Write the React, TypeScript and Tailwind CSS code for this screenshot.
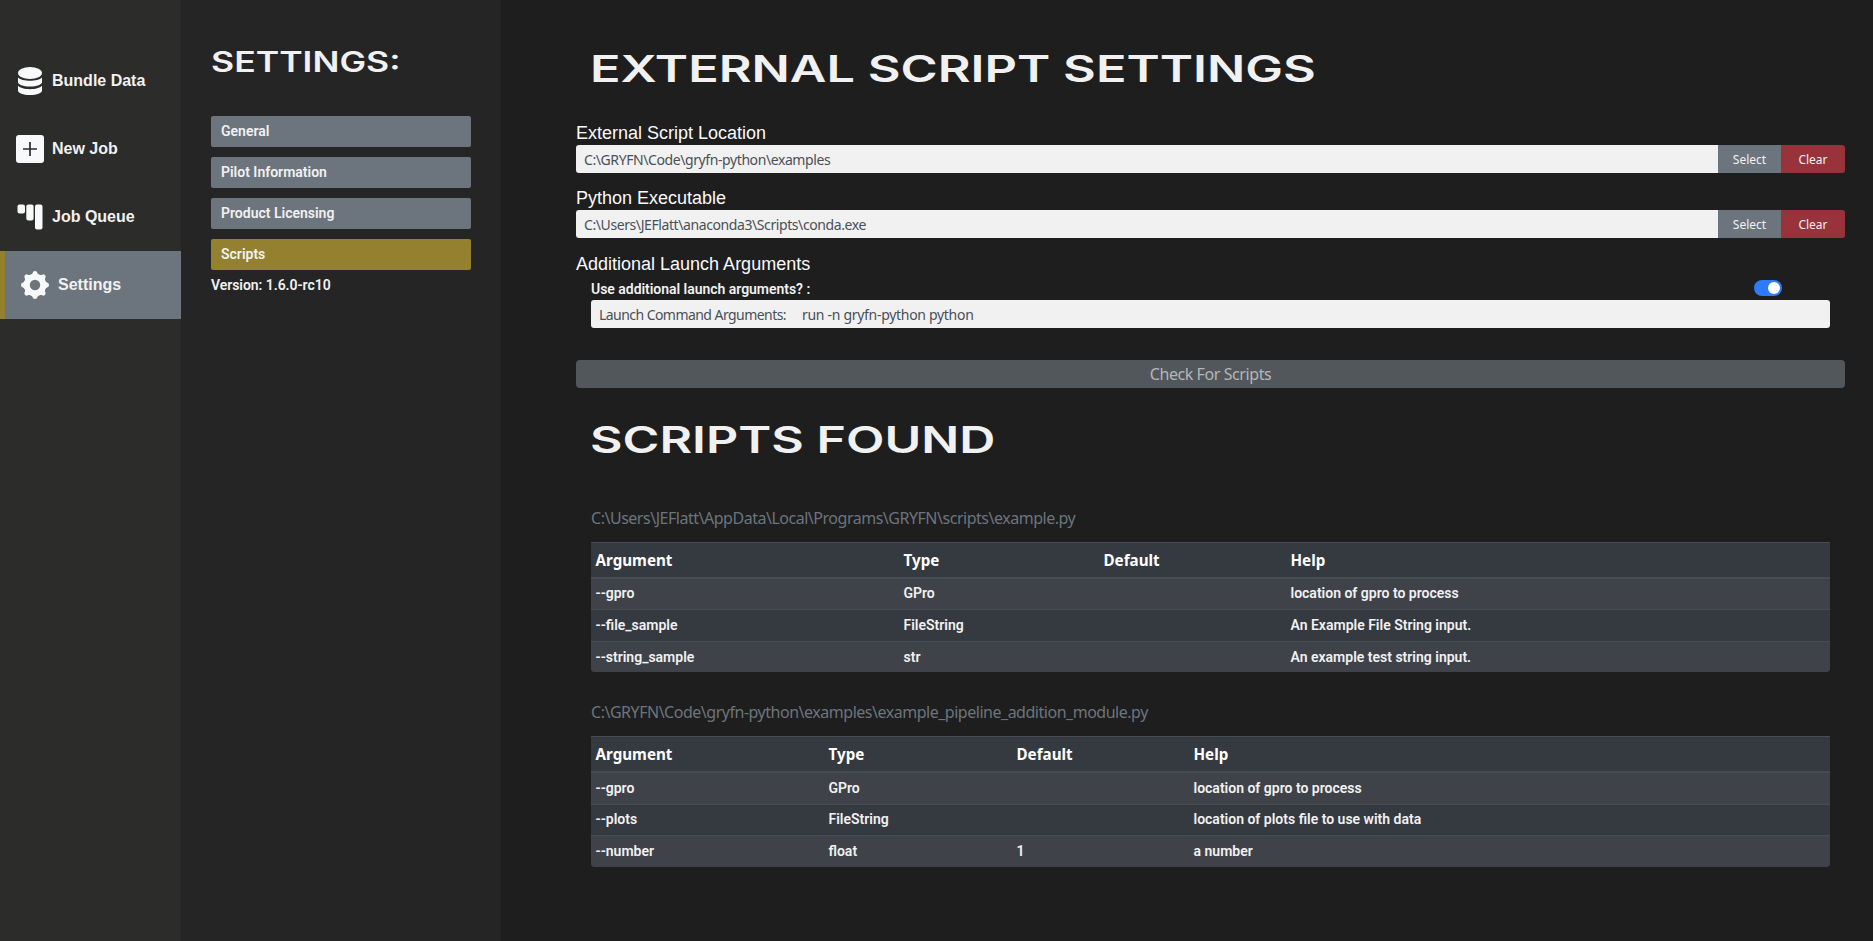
import type { ReactNode } from "react";

function DatabaseIcon() {
  return (
    <svg width="24" height="28" viewBox="0 0 24 28" fill="#f8f9fa">
      <ellipse cx="12" cy="6" rx="12" ry="6" />
      <path d="M0 10.500c2 2.200 7 3.300 12 3.300s10-1.100 12-3.300V15c0 2.400-5 4.500-12 4.500S0 17.400 0 15z" />
      <path d="M0 18.800c2 2.200 7 3.400 12 3.400s10-1.200 12-3.400V23.500c0 2.400-5 4.500-12 4.500S0 25.900 0 23.500z" />
    </svg>
  );
}

function NewJobIcon() {
  return (
    <svg width="28" height="28" viewBox="0 0 28 28">
      <rect width="28" height="28" rx="3" fill="#f8f9fa" />
      <path d="M14 7v14M7 14h14" stroke="#2c2c2a" strokeWidth="1.700" fill="none" />
    </svg>
  );
}

function QueueIcon() {
  return (
    <svg width="26" height="26" viewBox="0 0 26 26" fill="#f8f9fa">
      <rect x="0.500" y="0.500" width="7.500" height="9" rx="2" />
      <rect x="9.300" y="0.500" width="7.300" height="16" rx="2" />
      <rect x="18" y="0.500" width="7.500" height="25" rx="2" />
    </svg>
  );
}

function GearIcon() {
  return (
    <svg width="28" height="28" viewBox="-14 -14 28 28" fill="#f8f9fa">
      <circle r="8.200" fill="none" stroke="#f8f9fa" strokeWidth="6" />
      {[0, 45, 90, 135, 180, 225, 270, 315].map((a) => (
        <path key={a} d="M-4.500-9.500Q-2.600-11-1.900-13Q-1.500-14 0-14T1.900-13Q2.600-11 4.500-9.500L2-6h-4z" transform={`rotate(${a})`} />
      ))}
    </svg>
  );
}

function NavItem({ icon, label, active }: { icon: ReactNode; label: string; active?: boolean }) {
  return (
    <div
      className={
        "flex h-[68px] items-center font-['Liberation_Sans',sans-serif] text-[16px] font-bold text-[#f1f1f1] " +
        (active ? "gap-[9px] border-l-[5px] border-[#938130] bg-[#6c757d] pl-4" : "gap-2 pl-4")
      }
    >
      <span className="flex w-7 justify-center">{icon}</span>
      <span>{label}</span>
    </div>
  );
}

function PathField({ label, value }: { label: string; value: string }) {
  return (
    <div className="h-[65px]">
      <div className="h-[25px] font-['Liberation_Sans',sans-serif] text-[18px] leading-[27px] text-[#f8f9fa]">{label}</div>
      <div className="flex h-7 overflow-hidden rounded-[3px] font-['Noto_Sans',sans-serif]">
        <div className="flex-1 bg-[#f1f1f1] pl-2 text-[14px] leading-[29px] tracking-[-0.410px] text-[#495057]">{value}</div>
        <button className="w-[63px] bg-[#6c757d] pt-0.5 text-[12px] text-[#f1f1f1]">Select</button>
        <button className="w-16 bg-[#98323b] pt-0.5 text-[12px] text-[#f1f1f1]">Clear</button>
      </div>
    </div>
  );
}

type Script = { path: string; cols: string; rows: string[][]; heights: string[] };

const scripts: Script[] = [
  {
    path: "C:\\Users\\JEFlatt\\AppData\\Local\\Programs\\GRYFN\\scripts\\example.py",
    cols: "grid-cols-[308px_200px_187px_1fr]",
    heights: ["h-[30px] pb-px", "h-[32px]", "h-[31px]"],
    rows: [
      ["--gpro", "GPro", "", "location of gpro to process"],
      ["--file_sample", "FileString", "", "An Example File String input."],
      ["--string_sample", "str", "", "An example test string input."],
    ],
  },
  {
    path: "C:\\GRYFN\\Code\\gryfn-python\\examples\\example_pipeline_addition_module.py",
    cols: "grid-cols-[233px_188px_177px_1fr]",
    heights: ["h-[31px]", "h-[31px] pb-0.5", "h-[32px]"],
    rows: [
      ["--gpro", "GPro", "", "location of gpro to process"],
      ["--plots", "FileString", "", "location of plots file to use with data"],
      ["--number", "float", "1", "a number"],
    ],
  },
];

function ScriptTable({ script }: { script: Script }) {
  return (
    <section>
      <div className="h-[35px] font-['Noto_Sans',sans-serif] text-[16px] leading-[23px] tracking-[-0.480px] whitespace-nowrap text-[#6c757d]">
        {script.path}
      </div>
      <div className="overflow-hidden rounded-b-[4px] bg-[#343a40]">
        <div
          className={
            "grid h-[37px] items-center border-t border-b-2 border-t-[#454d55] border-b-[#474b54] bg-[#353940] pl-[4.500px] font-['Noto_Sans',sans-serif] text-[15.200px] font-bold text-white " +
            script.cols
          }
        >
          {["Argument", "Type", "Default", "Help"].map((h) => (
            <span key={h}>{h}</span>
          ))}
        </div>
        {script.rows.map((row, i) => (
          <div
            key={row[0]}
            className={
              "grid items-center pl-[4.500px] font-['Roboto',sans-serif] text-[14px] font-semibold text-[#f1f1f1] " +
              script.cols + " " + script.heights[i] + " " +
              (i % 2 === 0 ? "bg-[#3f4349] " : "bg-[#353940] ") +
              (i > 0 ? "border-t border-[#474b54]" : "")
            }
          >
            {row.map((cell, c) => (
              <span key={c}>{cell}</span>
            ))}
          </div>
        ))}
      </div>
    </section>
  );
}

export default function App() {
  return (
    <div className="flex h-[941px] w-[1873px] overflow-hidden bg-[#1e1e1e]">
      <nav className="w-[181px] shrink-0 bg-[#2c2c2a] pt-[47px]">
        <NavItem icon={<DatabaseIcon />} label="Bundle Data" />
        <NavItem icon={<NewJobIcon />} label="New Job" />
        <NavItem icon={<QueueIcon />} label="Job Queue" />
        <NavItem icon={<GearIcon />} label="Settings" active />
      </nav>

      <aside className="w-80 shrink-0 bg-[#252525] px-[30px] pt-[42px] font-['Roboto',sans-serif] text-[14px] font-semibold text-[#f1f1f1]">
        <h2 className="h-[74px] origin-left scale-x-[1.270] font-['Inter',sans-serif] text-[28px] leading-10 font-semibold whitespace-nowrap">
          SETTINGS:
        </h2>
        <div className="flex flex-col gap-2.5">
          {["General", "Pilot Information", "Product Licensing", "Scripts"].map((name) => (
            <div
              key={name}
              className={"h-[31px] rounded-[2px] pl-2.5 leading-[30px] " + (name === "Scripts" ? "bg-[#938130]" : "bg-[#6c757d]")}
            >
              {name}
            </div>
          ))}
        </div>
        <div className="leading-[30px] tracking-[-0.050px]">Version: 1.6.0-rc10</div>
      </aside>

      <main className="w-[1344px] pt-10 pl-[75px]">
        <h1 className="ml-[14px] h-20 w-fit origin-left scale-x-[1.363] font-['Inter',sans-serif] text-[37px] leading-[58px] font-semibold whitespace-nowrap text-[#f1f1f1]">
          EXTERNAL SCRIPT SETTINGS
        </h1>
        <PathField label="External Script Location" value="C:\GRYFN\Code\gryfn-python\examples" />
        <PathField label="Python Executable" value="C:\Users\JEFlatt\anaconda3\Scripts\conda.exe" />
        <div className="h-[30px] font-['Liberation_Sans',sans-serif] text-[18px] leading-[29px] text-[#f8f9fa]">
          Additional Launch Arguments
        </div>
        <div className="mx-[15px]">
          <div className="flex h-5 items-center justify-between pr-12 font-['Roboto',sans-serif] text-[14px] font-semibold text-[#f1f1f1]">
            <span className="-mt-0.5 tracking-[-0.030px]">Use additional launch arguments? :</span>
            <span className="-mt-1 flex h-4 w-7 justify-end rounded-full bg-[#2f7bff] p-0.5">
              <span className="h-3 w-3 rounded-full bg-white" />
            </span>
          </div>
          <div className="flex h-7 gap-4 rounded-[3px] bg-[#f1f1f1] pl-2 font-['Noto_Sans',sans-serif] text-[14px] leading-[29px] text-[#495057]">
            <span className="tracking-[-0.550px]">Launch Command Arguments:</span>
            <span className="tracking-[-0.300px]">run -n gryfn-python python</span>
          </div>
        </div>
        <button className="mt-8 block h-7 w-full rounded-[4px] bg-[#52575b] font-['Noto_Sans',sans-serif] text-[16px] leading-[27px] tracking-[-0.420px] text-[#b4b6b7]">
          Check For Scripts
        </button>
        <h1 className="mt-[23px] ml-[14px] h-24 w-fit origin-left scale-x-[1.353] font-['Inter',sans-serif] text-[37px] leading-[58px] font-semibold whitespace-nowrap text-[#f1f1f1]">
          SCRIPTS FOUND
        </h1>
        <div className="mx-[15px] flex flex-col gap-[29px]">
          {scripts.map((s) => (
            <ScriptTable key={s.path} script={s} />
          ))}
        </div>
      </main>
    </div>
  );
}
